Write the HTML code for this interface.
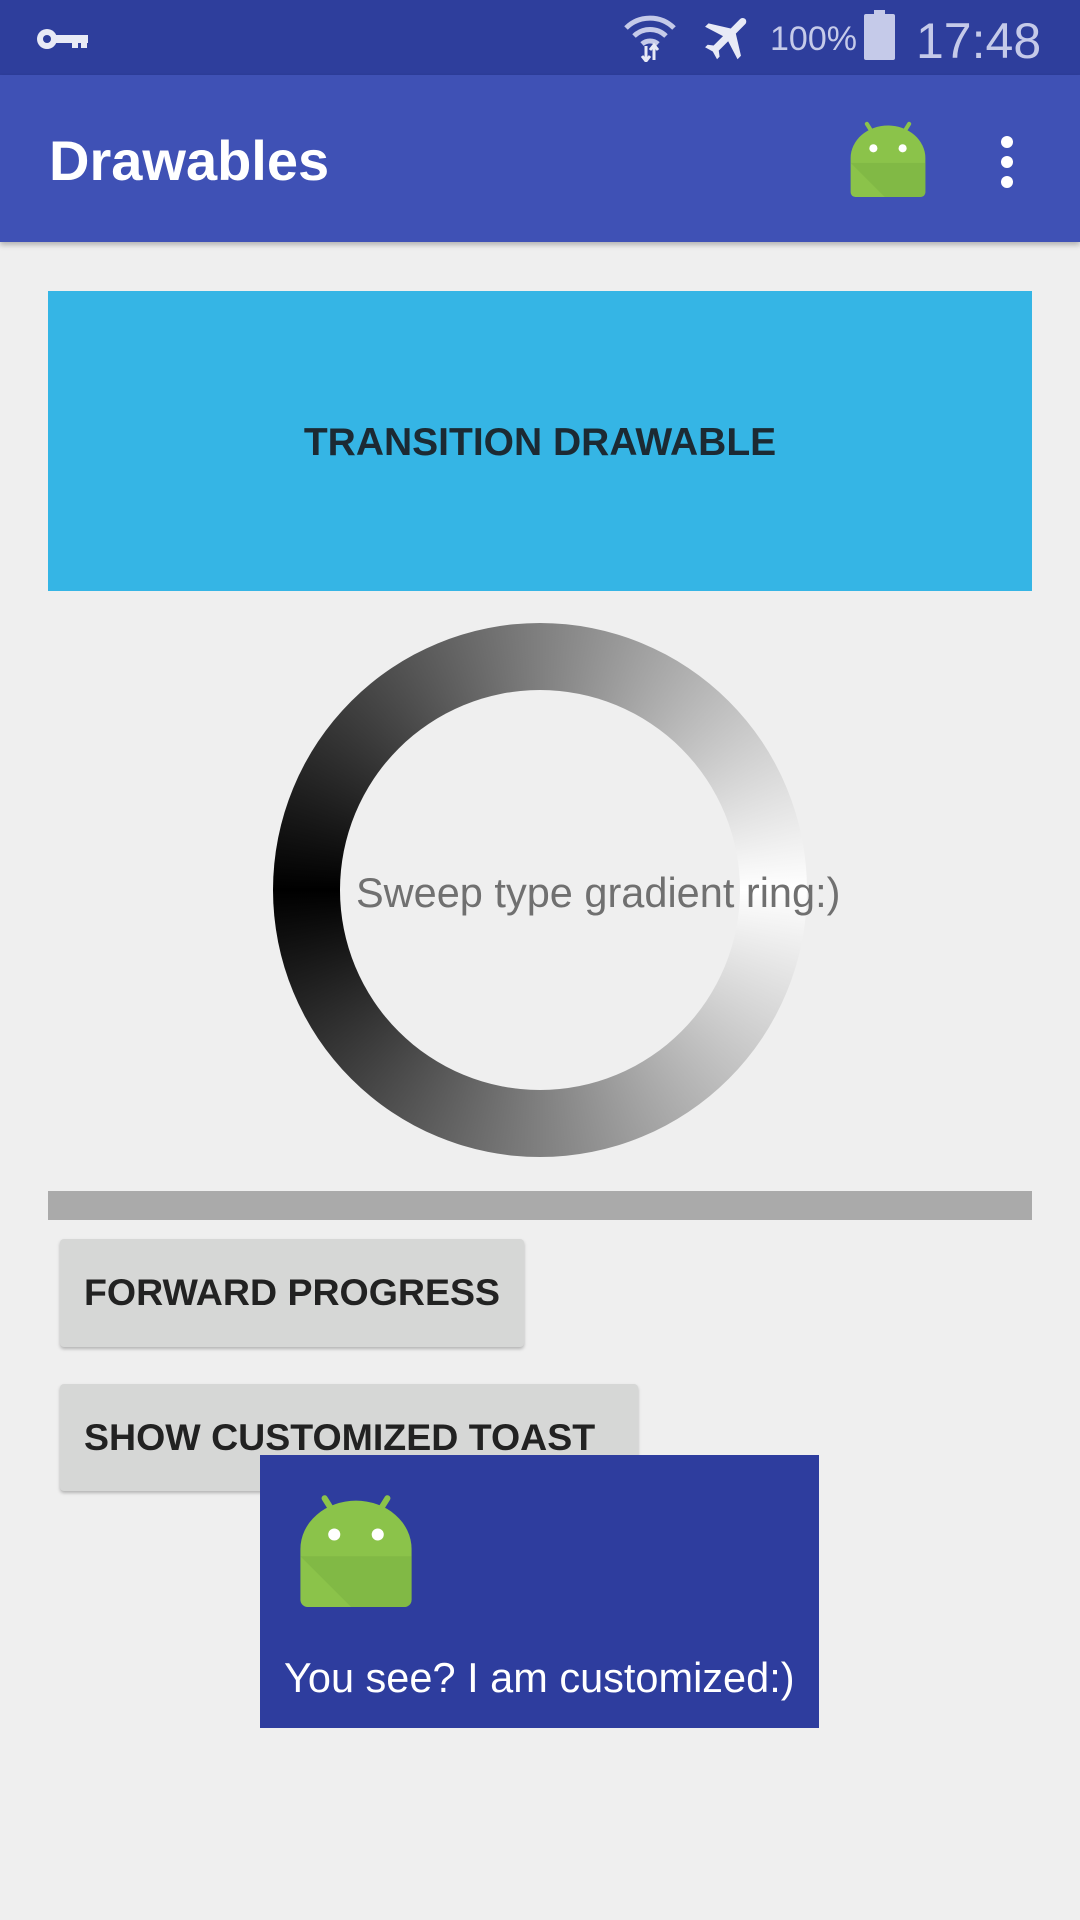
<!DOCTYPE html>
<html><head><meta charset="utf-8"><style>
*{margin:0;padding:0;box-sizing:border-box}
body{width:1080px;height:1920px;background:#efefef;font-family:"Liberation Sans",sans-serif;position:relative;overflow:hidden}
.abs{position:absolute}
.btn{position:absolute;background:#d6d7d6;border-radius:4px;box-shadow:0 2px 3px rgba(0,0,0,.25);font-weight:bold;font-size:37.5px;color:#222;line-height:1;display:flex;align-items:center;padding-left:24px}
</style></head><body>
<div class="abs" style="left:0;top:0;width:1080px;height:75px;background:#2e3e9c"></div>
<svg class="abs" style="left:36px;top:27px" width="54" height="24" viewBox="0 0 54 24"><circle cx="11" cy="12" r="10" fill="#e8eaf6"/><circle cx="11" cy="12" r="4" fill="#2e3e9c"/><rect x="18" y="8" width="34" height="8" fill="#e8eaf6"/><rect x="36" y="14" width="6" height="7" fill="#e8eaf6"/><rect x="45" y="14" width="6" height="7" fill="#e8eaf6"/></svg>
<svg class="abs" style="left:622px;top:10px" width="56" height="52" viewBox="0 0 56 52"><path d="M4 18 A34 34 0 0 1 52 18" stroke="#c5cae9" stroke-width="5" fill="none"/><path d="M12 26 A23 23 0 0 1 44 26" stroke="#c5cae9" stroke-width="5" fill="none"/><path d="M20 34 A12 12 0 0 1 36 34" stroke="#c5cae9" stroke-width="5" fill="none"/><path d="M24 36v14M20 46l4 5 4-5M32 50V36M28 40l4-5 4 5" stroke="#e8eaf6" stroke-width="3" fill="none"/></svg>
<svg class="abs" style="left:700px;top:8px" width="58" height="58" viewBox="0 0 24 24"><path fill="#e8eaf6" d="M21 16v-2l-8-5V3.5C13 2.7 12.3 2 11.5 2S10 2.7 10 3.5V9l-8 5v2l8-2.5V19l-2 1.5V22l3.5-1 3.5 1v-1.5L13 19v-5.5l8 2.5z" transform="rotate(45 12 12)"/></svg>
<div class="abs" style="left:770px;top:20px;font-size:34px;color:#c5cae9">100%</div>
<div class="abs" style="left:864px;top:14px;width:31px;height:46px;background:#c5cae9;border-radius:2px"></div>
<div class="abs" style="left:874px;top:10px;width:11px;height:6px;background:#c5cae9"></div>
<div class="abs" style="left:916px;top:12px;font-size:50px;color:#c5cae9">17:48</div>
<div class="abs" style="left:0;top:75px;width:1080px;height:167px;background:#3f51b5;box-shadow:0 3px 5px rgba(0,0,0,.25)"></div>
<div class="abs" style="left:49px;top:128px;font-size:56px;font-weight:bold;color:#fff">Drawables</div>
<svg class="abs" style="left:849px;top:117px" width="78" height="82" viewBox="0 0 96 100"><path d="M22 8l10 16M74 8L64 24" stroke="#8bc34a" stroke-width="5" stroke-linecap="round"/><path d="M2 50 A46 40 0 0 1 94 50 V92 a6 6 0 0 1-6 6H8a6 6 0 0 1-6-6z" fill="#8bc34a"/><path d="M2 56 L94 56 V92 a6 6 0 0 1-6 6H44z" fill="#7cb342" opacity=".6"/><circle cx="30" cy="38" r="5" fill="#fff"/><circle cx="66" cy="38" r="5" fill="#fff"/></svg>
<div class="abs" style="left:1001px;top:136px;width:12px;height:12px;border-radius:6px;background:#fff;box-shadow:0 20px 0 #fff,0 40px 0 #fff"></div>
<div class="abs" style="left:48px;top:291px;width:984px;height:300px;background:#35b5e5;display:flex;align-items:center;justify-content:center;font-size:39px;font-weight:bold;color:#1c2a33;padding-top:4px">TRANSITION DRAWABLE</div>
<div class="abs" style="left:273px;top:623px;width:534px;height:534px;border-radius:50%;background:conic-gradient(from 90deg,#fff,#000 50%,#fff)"></div>
<div class="abs" style="left:340px;top:690px;width:400px;height:400px;border-radius:50%;background:#efefef"></div>
<div class="abs" style="left:356px;top:869px;font-size:41.5px;color:#707070">Sweep type gradient ring:)</div>
<div class="abs" style="left:48px;top:1191px;width:984px;height:29px;background:#aaa"></div>
<div class="btn" style="left:60px;top:1239px;width:464px;height:108px">FORWARD PROGRESS</div>
<div class="btn" style="left:60px;top:1384px;width:578px;height:107px">SHOW CUSTOMIZED TOAST</div>
<div class="abs" style="left:260px;top:1455px;width:559px;height:273px;background:#2e3d9e"></div>
<svg class="abs" style="left:298px;top:1488px" width="116" height="122" viewBox="0 0 96 100"><path d="M22 8l10 16M74 8L64 24" stroke="#8bc34a" stroke-width="5" stroke-linecap="round"/><path d="M2 50 A46 40 0 0 1 94 50 V92 a6 6 0 0 1-6 6H8a6 6 0 0 1-6-6z" fill="#8bc34a"/><path d="M2 56 L94 56 V92 a6 6 0 0 1-6 6H44z" fill="#7cb342" opacity=".6"/><circle cx="30" cy="38" r="5" fill="#fff"/><circle cx="66" cy="38" r="5" fill="#fff"/></svg>
<div class="abs" style="left:284px;top:1654px;font-size:41.5px;color:#fff">You see? I am customized:)</div>
</body></html>
